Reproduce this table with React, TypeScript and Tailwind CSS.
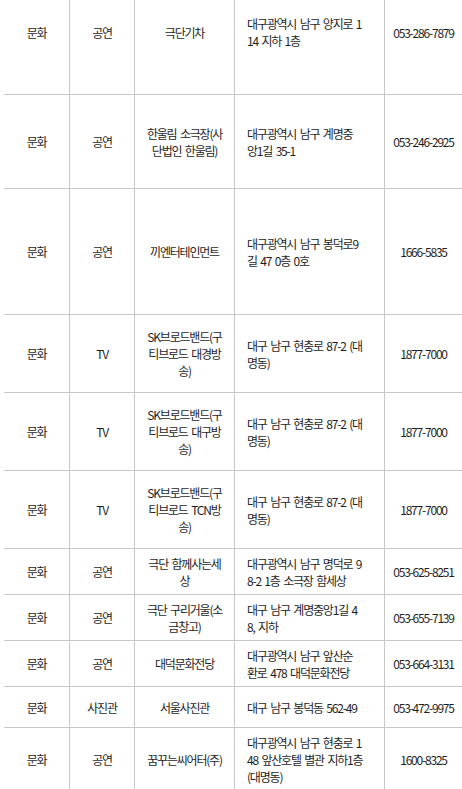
import React from "react";

type Row = {
  h: string;
  a: string;
  b: string;
  c: string[];
  d: string[];
  e: string;
};

const rows: Row[] = [
  { h: "h-[125px]", a: "문화", b: "공연", c: ["극단기차"], d: ["대구광역시 남구 양지로 1", "14 지하 1층"], e: "053-286-7879" },
  { h: "h-[94px]", a: "문화", b: "공연", c: ["한울림 소극장(사", "단법인 한울림)"], d: ["대구광역시 남구 계명중", "앙1길 35-1"], e: "053-246-2925" },
  { h: "h-[126px]", a: "문화", b: "공연", c: ["끼엔터테인먼트"], d: ["대구광역시 남구 봉덕로9", "길 47 0층 0호"], e: "1666-5835" },
  { h: "h-[78px]", a: "문화", b: "TV", c: ["SK브로드밴드(구", "티브로드 대경방", "송)"], d: ["대구 남구 현충로 87-2 (대", "명동)"], e: "1877-7000" },
  { h: "h-[78px]", a: "문화", b: "TV", c: ["SK브로드밴드(구", "티브로드 대구방", "송)"], d: ["대구 남구 현충로 87-2 (대", "명동)"], e: "1877-7000" },
  { h: "h-[78px]", a: "문화", b: "TV", c: ["SK브로드밴드(구", "티브로드 TCN방", "송)"], d: ["대구 남구 현충로 87-2 (대", "명동)"], e: "1877-7000" },
  { h: "h-[46px]", a: "문화", b: "공연", c: ["극단 함께사는세", "상"], d: ["대구광역시 남구 명덕로 9", "8-2 1층 소극장 함세상"], e: "053-625-8251" },
  { h: "h-[46px]", a: "문화", b: "공연", c: ["극단 구리거울(소", "금창고)"], d: ["대구 남구 계명중앙1길 4", "8, 지하"], e: "053-655-7139" },
  { h: "h-[46px]", a: "문화", b: "공연", c: ["대덕문화전당"], d: ["대구광역시 남구 앞산순", "환로 478 대덕문화전당"], e: "053-664-3131" },
  { h: "h-[41px]", a: "문화", b: "사진관", c: ["서울사진관"], d: ["대구 남구 봉덕동 562-49"], e: "053-472-9975" },
  { h: "h-[63px]", a: "문화", b: "공연", c: ["꿈꾸는씨어터(주)"], d: ["대구광역시 남구 현충로 1", "48 앞산호텔 별관 지하1층", "(대명동)"], e: "1600-8325" },
];

function Lines({ lines }: { lines: string[] }) {
  return (
    <div>
      {lines.map((l, i) => (
        <div key={i} className="whitespace-nowrap">
          {l}
        </div>
      ))}
    </div>
  );
}

export default function App() {
  return (
    <div
      className="w-[462px] h-[789px] overflow-hidden bg-white text-[#1e1e1e] text-[12px] leading-[17px] tracking-[-1.2px] [word-spacing:2px]"
      style={{ fontFamily: '"Noto Sans CJK KR", "Noto Sans", sans-serif' }}
    >
      <div className="ml-[4px] -mt-[30px] w-[458px]">
        {rows.map((r, i) => (
          <div key={i} className={`flex ${r.h} border-b border-[#c8c8c8]`}>
            <div className="w-[66px] shrink-0 border-r border-[#c8c8c8] flex items-center justify-center text-center">
              {r.a}
            </div>
            <div className="w-[65px] shrink-0 border-r border-[#c8c8c8] flex items-center justify-center text-center">
              {r.b}
            </div>
            <div className="w-[100px] shrink-0 border-r border-[#c8c8c8] flex items-center justify-center text-center">
              <Lines lines={r.c} />
            </div>
            <div className="w-[150px] shrink-0 border-r border-[#c8c8c8] flex items-center justify-start pl-[12px]">
              <Lines lines={r.d} />
            </div>
            <div className="flex-1 flex items-center justify-center text-center">{r.e}</div>
          </div>
        ))}
      </div>
    </div>
  );
}
